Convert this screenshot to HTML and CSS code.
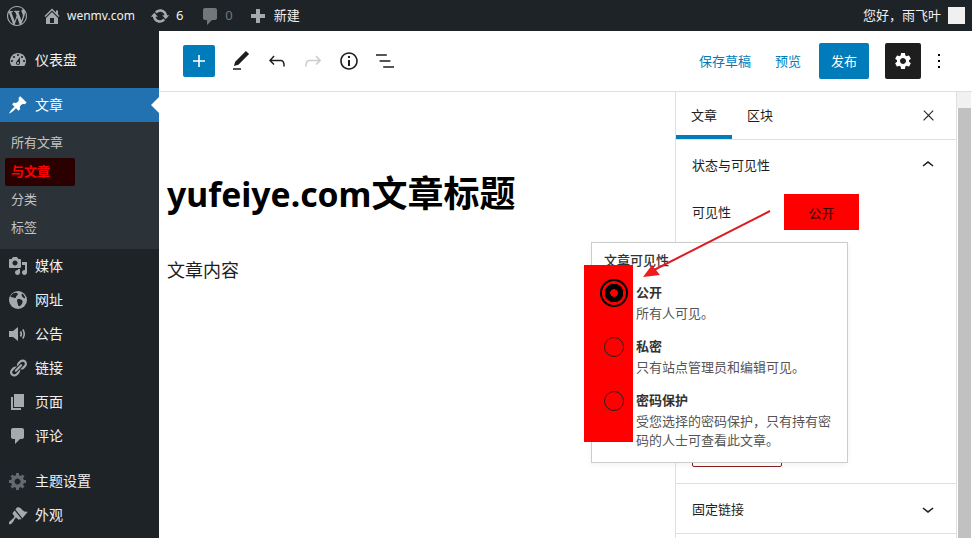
FILE: index.html
```html
<!DOCTYPE html>
<html lang="zh-CN">
<head>
    <meta charset="UTF-8">
    <meta name="viewport" content="width=device-width, initial-scale=1.0">
    <title>写文章</title>
    <link rel="stylesheet" href="styles.css">
</head>
<body>
    <header class="adminbar">
        <div class="adminbar-left">
            <svg class="ab-logo" viewBox="0 0 20 20"><path d="M20 10c0-5.51-4.49-10-10-10C4.48 0 0 4.49 0 10c0 5.52 4.48 10 10 10 5.51 0 10-4.48 10-10zM7.78 15.37L4.37 6.22c.55-.02 1.17-.08 1.17-.08.5-.06.44-1.13-.06-1.11 0 0-1.45.11-2.37.11-.18 0-.37 0-.58-.01C4.12 2.69 6.87 1.11 10 1.11c2.33 0 4.45.87 6.05 2.34-.68-.11-1.65.39-1.65 1.58 0 .74.45 1.36.9 2.1.35.61.55 1.36.55 2.46 0 1.49-1.4 5-1.4 5l-3.03-8.37c.54-.02.82-.17.82-.17.5-.05.44-1.25-.06-1.22 0 0-1.44.12-2.38.12-.87 0-2.33-.12-2.33-.12-.5-.03-.56 1.2-.06 1.22l.92.08 1.26 3.41zM17.41 10c.24-.64.74-1.87.43-4.25.7 1.29 1.05 2.71 1.05 4.25 0 3.29-1.73 6.24-4.4 7.78.97-2.59 1.94-5.2 2.92-7.78zM6.1 18.09C3.12 16.65 1.11 13.53 1.11 10c0-1.3.23-2.48.72-3.59C3.25 10.3 4.67 14.2 6.1 18.09zm4.03-6.63l2.58 6.98c-.86.29-1.76.45-2.71.45-.79 0-1.57-.11-2.29-.33.81-2.38 1.62-4.74 2.42-7.1z"/></svg>
            <span class="ab-item ab-site">
                <svg class="ab-icon" viewBox="0 0 20 20"><path d="M16 8.5l1.53 1.53-1.06 1.06L10 4.62l-6.47 6.47-1.06-1.06L10 2.5l4 4v-2h2v4zm-6-2.46l6 5.99V18H4v-5.97zM12 17v-5H8v5h4z"/></svg>
                wenmv.com
            </span>
            <span class="ab-item ab-updates">
                <svg class="ab-icon" viewBox="0 0 20 20"><path d="M10.2 3.28c3.53 0 6.43 2.61 6.92 6h2.08l-3.5 4-3.5-4h2.32c-.45-1.97-2.21-3.45-4.32-3.45-1.45 0-2.73.71-3.54 1.78L4.95 5.66C6.23 4.2 8.11 3.28 10.2 3.28zm-.4 13.44c-3.52 0-6.43-2.61-6.92-6H.8l3.5-4c1.17 1.33 2.33 2.67 3.5 4H5.48c.45 1.97 2.21 3.45 4.32 3.45 1.45 0 2.73-.71 3.54-1.78l1.71 1.95c-1.28 1.46-3.15 2.38-5.25 2.38z"/></svg>
                6
            </span>
            <span class="ab-item ab-comments">
                <svg class="ab-icon" viewBox="0 0 20 20"><path d="M5 2h10c1.1 0 2 .9 2 2v8c0 1.1-.9 2-2 2h-3l-5 5v-5H5c-1.1 0-2-.9-2-2V4c0-1.1.9-2 2-2z"/></svg>
                <span class="ab-zero">0</span>
            </span>
            <span class="ab-item ab-new">
                <svg class="ab-icon" viewBox="0 0 20 20"><path d="M17 8v4h-5v5H8v-5H3V8h5V3h4v5h5z"/></svg>
                新建
            </span>
        </div>
        <div class="adminbar-right">
            <span>您好，雨飞叶</span>
            <span class="avatar"></span>
        </div>
    </header>

    <div class="wrap">
        <nav class="sidemenu">
            <a class="menu-item">
                <svg class="menu-icon" viewBox="0 0 20 20"><path d="M3.76 16h12.48c1.1-1.37 1.76-3.11 1.76-5 0-4.42-3.58-8-8-8s-8 3.58-8 8c0 1.89.66 3.63 1.76 5zM10 4c.55 0 1 .45 1 1s-.45 1-1 1-1-.45-1-1 .45-1 1-1zM6 6c.55 0 1 .45 1 1s-.45 1-1 1-1-.45-1-1 .45-1 1-1zm8 0c.55 0 1 .45 1 1s-.45 1-1 1-1-.45-1-1 .45-1 1-1zm-5.37 5.55L12 7v6c0 1.1-.9 2-2 2s-2-.9-2-2c0-.57.24-1.08.63-1.45zM4 10c.55 0 1 .45 1 1s-.45 1-1 1-1-.45-1-1 .45-1 1-1zm12 0c.55 0 1 .45 1 1s-.45 1-1 1-1-.45-1-1 .45-1 1-1zm-5 3c0-.55-.45-1-1-1s-1 .45-1 1 .45 1 1 1 1-.45 1-1z"/></svg>
                仪表盘
            </a>
            <a class="menu-item active">
                <svg class="menu-icon" viewBox="0 0 20 20"><path d="M10.44 3.02l1.82-1.82 6.36 6.35-1.83 1.82c-1.05-.68-2.48-.57-3.41.36l-.75.75c-.92.93-1.04 2.35-.35 3.41l-1.83 1.82-2.41-2.41-2.8 2.79c-.42.42-3.38 2.71-3.8 2.29s1.86-3.39 2.28-3.81l2.79-2.79L4.1 9.36l1.83-1.82c1.05.69 2.48.57 3.4-.36l.75-.75c.93-.92 1.05-2.35.36-3.41z"/></svg>
                文章
            </a>
            <ul class="submenu">
                <li>所有文章</li>
                <li><span class="current">与文章</span></li>
                <li>分类</li>
                <li>标签</li>
            </ul>
            <a class="menu-item">
                <svg class="menu-icon" viewBox="0 0 20 20"><path d="M13 11V4c0-.55-.45-1-1-1h-1.67L9 1H5L3.67 3H2c-.55 0-1 .45-1 1v7c0 .55.45 1 1 1h10c.55 0 1-.45 1-1zM7 4.5c1.38 0 2.5 1.12 2.5 2.5S8.38 9.5 7 9.5 4.5 8.38 4.5 7 5.62 4.5 7 4.5zM14 6h5v10.5c0 1.38-1.12 2.5-2.5 2.5S14 17.88 14 16.5s1.12-2.5 2.5-2.5c.17 0 .34.02.5.05V9h-3V6zm-4 8.05V13h2v3.5c0 1.38-1.12 2.5-2.5 2.5S7 17.88 7 16.5 8.12 14 9.5 14c.17 0 .34.02.5.05z"/></svg>
                媒体
            </a>
            <a class="menu-item">
                <svg class="menu-icon" viewBox="0 0 20 20">
                    <circle cx="10" cy="10" r="9"/>
                    <path class="cutout" d="M5 3.5c2-1 4-1 5 .5 0 1.500-2 1.500-2 3s-2 1-3 .5S2 7 2.500 6zM10 9c2 0 4 .5 4.500 2s-1 4-2.500 5-2-1-2.500-3S8.500 9.500 10 9zM14 3.500c1.500.8 2.800 2.500 3.200 4.500-1.200.5-2.500-.5-3-1.500s-1-2-.2-3z"/>
                </svg>
                网址
            </a>
            <a class="menu-item">
                <svg class="menu-icon" viewBox="0 0 20 20">
                    <path d="M1 7h4l5-4v14l-5-4H1z"/>
                    <path class="line" d="M12.500 7.500c1 1.500 1 3.500 0 5M14.800 5.500c2 3 2 6 0 9"/>
                </svg>
                公告
            </a>
            <a class="menu-item">
                <svg class="menu-icon" viewBox="0 0 20 20"><path d="M17.74 2.76c1.68 1.69 1.68 4.41 0 6.1l-1.53 1.52c-1.12 1.12-2.7 1.47-4.14 1.09l2.62-2.61.76-.77.76-.76c.84-.84.84-2.2 0-3.04-.84-.85-2.2-.85-3.04 0l-.77.76-3.38 3.38c-.37-1.44-.02-3.02 1.1-4.14l1.52-1.53c1.69-1.68 4.42-1.68 6.1 0zM8.59 13.43l5.34-5.34c.42-.42.42-1.1 0-1.52-.44-.43-1.13-.39-1.53 0l-5.33 5.34c-.42.42-.42 1.1 0 1.52.44.43 1.13.39 1.52 0zm-.76 2.29l4.14-4.15c.38 1.44.03 3.02-1.09 4.14l-1.52 1.53c-1.69 1.68-4.41 1.68-6.1 0-1.68-1.68-1.68-4.42 0-6.1l1.53-1.52c1.12-1.12 2.7-1.47 4.14-1.1l-4.14 4.15c-.85.84-.85 2.2 0 3.05.84.84 2.2.84 3.04 0z"/></svg>
                链接
            </a>
            <a class="menu-item">
                <svg class="menu-icon" viewBox="0 0 20 20"><path d="M6 15V2h10v13H6zm-1 1h8v2H3V5h2v11z"/></svg>
                页面
            </a>
            <a class="menu-item">
                <svg class="menu-icon" viewBox="0 0 20 20"><path d="M5 2h9c1.1 0 2 .9 2 2v7c0 1.1-.9 2-2 2h-2l-5 5v-5H5c-1.1 0-2-.9-2-2V4c0-1.1.9-2 2-2z"/></svg>
                评论
            </a>
            <a class="menu-item spaced">
                <svg class="menu-icon dim" viewBox="0 0 20 20"><path d="M18 12h-2.180c-.17.7-.44 1.350-.81 1.930l1.540 1.540-2.100 2.100-1.540-1.540c-.58.36-1.230.63-1.910.79V19H8v-2.180c-.68-.16-1.330-.43-1.910-.79l-1.540 1.540-2.120-2.120 1.540-1.540c-.36-.58-.63-1.230-.79-1.910H1V9.030h2.170c.16-.7.44-1.350.8-1.940L2.430 5.550l2.100-2.100 1.540 1.540c.58-.37 1.240-.64 1.930-.81V2h3v2.180c.68.16 1.330.43 1.910.79l1.540-1.540 2.120 2.120-1.540 1.540c.36.59.64 1.240.8 1.940H18V12zm-8.500 1.500c1.660 0 3-1.340 3-3s-1.340-3-3-3-3 1.340-3 3 1.340 3 3 3z"/></svg>
                主题设置
            </a>
            <a class="menu-item">
                <svg class="menu-icon" viewBox="0 0 20 20"><path transform="translate(0 -0.5) scale(1 1.25)" d="M14.480 11.060L7.410 3.990l1.500-1.500c.5-.56 2.300-.47 3.510.32 1.210.8 1.430 1.280 2.910 2.100 1.180.64 2.450 1.260 4.450.85zm-.71.71L6.700 4.700 4.930 6.470c-.39.39-.39 1.020 0 1.410l1.060 1.060c.39.39.39 1.030 0 1.420-.6.6-1.430 1.110-2.210 1.690-.35.26-.7.53-1.010.84C1.430 13.230.4 14.790 1.200 15.600c.8.8 2.360-.22 3.710-1.570.31-.31.58-.66.84-1.010.58-.78 1.090-1.610 1.690-2.210.39-.39 1.020-.39 1.410 0l1.060 1.060c.39.39 1.020.39 1.410 0z"/></svg>
                外观
            </a>
        </nav>

        <main class="editor">
            <div class="toolbar">
                <div class="tools">
                    <button class="add-btn"><svg viewBox="0 0 24 24"><path d="M18 11.200h-5.200V6h-1.600v5.200H6v1.600h5.200V18h1.600v-5.200H18z"/></svg></button>
                    <button class="tool"><svg viewBox="0 0 24 24"><path d="M20.100 5.100L16.900 2 6.200 12.700l-1.300 4.400 4.500-1.300L20.100 5.100zM4 20.800h8v-1.500H4v1.500z"/></svg></button>
                    <button class="tool"><svg viewBox="0 0 24 24"><path d="M18.300 11.700c-.6-.6-1.400-.9-2.300-.9H6.700l2.900-3.300-1.100-1-4.500 5L8.500 16l1-1-2.700-2.700H16c.5 0 .9.2 1.300.5 1 1 1 3.400 1 4.500v.3h1.500v-.2c0-1.500 0-4.300-1.500-5.700z"/></svg></button>
                    <button class="tool off"><svg viewBox="0 0 24 24"><path d="M15.600 6.500l-1.100 1 2.900 3.300H8c-.9 0-1.700.3-2.300.9-1.400 1.500-1.400 4.200-1.400 5.600v.2h1.500v-.3c0-1.100 0-3.500 1-4.500.3-.3.7-.5 1.300-.5h9.200L14.500 15l1.100 1.100 4.600-4.600-4.600-5z"/></svg></button>
                    <button class="tool"><svg viewBox="0 0 24 24"><path d="M12 3.200c-4.800 0-8.800 3.900-8.800 8.800 0 4.800 3.900 8.800 8.800 8.800 4.800 0 8.800-3.900 8.800-8.800 0-4.800-4-8.800-8.800-8.800zm0 16c-4 0-7.200-3.300-7.200-7.200C4.800 8 8 4.800 12 4.800s7.200 3.300 7.200 7.200c0 4-3.200 7.200-7.200 7.200zM11 17h2v-6h-2v6zm0-8h2V7h-2v2z"/></svg></button>
                    <button class="tool"><svg viewBox="0 0 24 24"><path d="M13.800 5.200H3v1.500h10.800V5.200zm-3.600 12v1.500H21v-1.500H10.200zm7.200-6H6.600v1.500h10.800v-1.500z"/></svg></button>
                </div>
                <div class="actions">
                    <span class="link-btn">保存草稿</span>
                    <span class="link-btn preview">预览</span>
                    <button class="publish">发布</button>
                    <button class="settings"><svg viewBox="0 0 24 24"><path d="M19.140 12.940c.04-.3.06-.61.06-.94 0-.32-.02-.64-.07-.94l2.030-1.580c.18-.14.23-.41.12-.61l-1.920-3.320c-.12-.22-.37-.29-.59-.22l-2.390.96c-.5-.38-1.030-.7-1.620-.94l-.36-2.540c-.04-.24-.24-.41-.48-.41h-3.840c-.24 0-.43.17-.47.41l-.36 2.540c-.59.24-1.130.57-1.620.94l-2.390-.96c-.22-.08-.47 0-.59.22L2.740 8.870c-.12.21-.08.47.12.61l2.030 1.580c-.05.3-.09.63-.09.94s.02.64.07.94l-2.030 1.580c-.18.14-.23.41-.12.61l1.920 3.320c.12.22.37.29.59.22l2.390-.96c.5.38 1.030.7 1.620.94l.36 2.540c.05.24.24.41.48.41h3.840c.24 0 .44-.17.47-.41l.36-2.540c.59-.24 1.130-.56 1.620-.94l2.390.96c.22.08.47 0 .59-.22l1.920-3.320c.12-.22.07-.47-.12-.61l-2.010-1.580zM12 15.600c-1.980 0-3.600-1.620-3.600-3.600s1.620-3.600 3.600-3.600 3.600 1.620 3.600 3.600-1.620 3.600-3.600 3.600z"/></svg></button>
                    <button class="more"><svg viewBox="0 0 24 24"><path d="M13 19h-2v-2h2v2zm0-6h-2v-2h2v2zm0-6h-2V5h2v2z"/></svg></button>
                </div>
            </div>

            <div class="editor-body">
                <section class="content">
                    <h1 class="post-title"><span class="title-latin">yufeiye.com</span>文章标题</h1>
                    <p class="post-text">文章内容</p>
                </section>

                <aside class="panel">
                    <div class="tabs">
                        <span class="tab selected">文章</span>
                        <span class="tab">区块</span>
                        <svg class="tabs-close" viewBox="0 0 24 24"><path d="M13 11.800l6.100-6.300-1-1-6.100 6.200-6.100-6.200-1 1 6.100 6.300-6.500 6.700 1 1 6.500-6.600 6.500 6.600 1-1z"/></svg>
                    </div>
                    <div class="box box-status">
                        <div class="box-head">
                            <span>状态与可见性</span>
                            <svg viewBox="0 0 24 24"><path d="M6.500 12.400L12 8l5.500 4.400-.9 1.200L12 10l-4.500 3.600-1-1.200z"/></svg>
                        </div>
                        <div class="visibility-row">
                            <span>可见性</span>
                            <button class="visibility-value">公开</button>
                        </div>
                        <button class="trash-btn"></button>
                    </div>
                    <div class="box">
                        <div class="box-head">
                            <span>固定链接</span>
                            <svg viewBox="0 0 24 24"><path d="M17.500 11.600L12 16l-5.500-4.400.9-1.200L12 14l4.600-3.600 1 1.200z"/></svg>
                        </div>
                    </div>
                </aside>

                <div class="scrollbar">
                    <span class="scroll-up"></span>
                    <span class="scroll-thumb"></span>
                </div>
            </div>
        </main>
    </div>

    <!-- visibility popover, floats over the panel -->
    <div class="popover">
        <div class="popover-title">文章可见性</div>
        <div class="option">
            <strong>公开</strong>
            <span>所有人可见。</span>
        </div>
        <div class="option">
            <strong>私密</strong>
            <span>只有站点管理员和编辑可见。</span>
        </div>
        <div class="option">
            <strong>密码保护</strong>
            <span>受您选择的密码保护，只有持有密码的人士可查看此文章。</span>
        </div>
    </div>

    <div class="radio-strip">
        <span class="radio checked"></span>
        <span class="radio"></span>
        <span class="radio"></span>
    </div>

    <svg class="arrow" viewBox="0 0 972 538">
        <path class="arrow-line" d="M770 211L652 271"/>
        <path class="arrow-head" d="M643 277L652 265L660 275z"/>
    </svg>
</body>
</html>
```

FILE: styles.css
```css
* {
    box-sizing: border-box;
}
html, body {
    margin: 0;
    height: 100%;
    overflow: hidden;
}
body {
    font-family: "Noto Sans", "Noto Sans CJK SC", sans-serif;
    font-size: 13px;
    color: #1e1e1e;
    background-color: #fff;
    display: flex;
    flex-direction: column;
}
button {
    font: inherit;
    border: 0;
    padding: 0;
    background: none;
}
svg {
    display: block;
    fill: currentColor;
}

/* top admin bar */
.adminbar {
    height: 31px;
    flex: none;
    display: flex;
    justify-content: space-between;
    align-items: center;
    padding: 0 7px;
    background-color: #1d2327;
    color: #f0f0f1;
    line-height: 31px;
}
.adminbar-left, .adminbar-right, .ab-item {
    display: flex;
    align-items: center;
}
.ab-logo {
    width: 20px;
    height: 20px;
    color: #a7aaad;
}
.ab-icon {
    width: 20px;
    height: 20px;
    margin-right: 6px;
    color: #a7aaad;
}
.ab-site {
    margin-left: 15px;
    font-size: 12px;
}
.ab-site .ab-icon {
    margin-right: 5px;
}
.ab-updates {
    margin-left: 15px;
}
.ab-comments {
    margin-left: 17px;
}
.ab-comments .ab-icon {
    color: #72777c;
    margin-right: 5px;
}
.ab-zero {
    color: #72777c;
}
.ab-new {
    margin-left: 15px;
}
.avatar {
    width: 17px;
    height: 17px;
    margin: 0 0 0 7px;
    background-color: #f0f0f1;
}

.wrap {
    flex: 1;
    display: flex;
    min-height: 0;
}

/* left admin menu */
.sidemenu {
    width: 159px;
    flex: none;
    padding-top: 12px;
    background-color: #1d2327;
    color: #f0f0f1;
    font-size: 14px;
}
.menu-item {
    height: 34px;
    display: flex;
    align-items: flex-start;
    padding-left: 8px;
    line-height: 33px;
    position: relative;
}
.menu-icon {
    width: 20px;
    height: 20px;
    margin: 7px 7px 0 0;
    color: #a7aaad;
}
.menu-icon.dim {
    color: #646970;
}
.menu-icon .cutout {
    fill: #1d2327;
}
.menu-icon .line {
    fill: none;
    stroke: currentColor;
    stroke-width: 1.6;
}
.menu-item.active {
    margin-top: 11px;
    background-color: #2271b1;
    color: #fff;
}
.menu-item.active .menu-icon {
    color: #fff;
}
.menu-item.active::after {
    content: "";
    position: absolute;
    right: 0;
    top: 9px;
    border: 8px solid transparent;
    border-right-color: #fff;
    border-left-width: 0;
}
.menu-item.spaced {
    margin-top: 11px;
}
.submenu {
    list-style: none;
    margin: 0;
    padding: 7px 0 8px;
    height: 127px;
    background-color: #2c3338;
    color: #c3c4c7;
    font-size: 13px;
}
.submenu li {
    height: 28px;
    line-height: 26px;
    padding-left: 11px;
}
.submenu .current {
    display: block;
    width: 70px;
    height: 28px;
    margin: 1px 0 0 -6px;
    padding-left: 6px;
    border-radius: 2px;
    background-color: #2b0000;
    color: #f00;
    font-weight: 700;
}

/* editor top toolbar */
.editor {
    flex: 1;
    min-width: 0;
    display: flex;
    flex-direction: column;
}
.toolbar {
    height: 61px;
    flex: none;
    display: flex;
    justify-content: space-between;
    align-items: center;
    padding: 0 21px 1px 24px;
    border-bottom: 1px solid #e0e0e0;
}
.tools, .actions {
    display: flex;
    align-items: center;
}
.add-btn {
    width: 32px;
    height: 32px;
    margin-right: 8px;
    border-radius: 2px;
    background-color: #007cba;
    color: #fff;
}
.add-btn svg {
    width: 24px;
    height: 24px;
    margin: 4px;
}
.tool {
    width: 36px;
    height: 36px;
    padding: 6px;
    color: #1e1e1e;
}
.tool svg {
    width: 24px;
    height: 24px;
}
.tool.off {
    color: #ccc;
}
.link-btn {
    margin-right: 24px;
    color: #007cba;
}
.link-btn.preview {
    margin-right: 18px;
}
.publish {
    width: 50px;
    height: 36px;
    margin-right: 16px;
    border-radius: 2px;
    background-color: #007cba;
    color: #fff;
}
.settings {
    width: 36px;
    height: 36px;
    padding: 8px;
    border-radius: 2px;
    background-color: #1e1e1e;
    color: #fff;
}
.settings svg {
    width: 20px;
    height: 20px;
}
.more {
    width: 24px;
    height: 24px;
    margin-left: 6px;
}
.more svg {
    width: 24px;
    height: 24px;
}

.editor-body {
    flex: 1;
    min-height: 0;
    display: flex;
}

/* post area */
.content {
    flex: 1;
    min-width: 0;
    padding: 78px 8px 0;
}
.post-title {
    margin: 0;
    font-size: 36px;
    line-height: 48px;
    font-weight: 700;
    color: #000;
    white-space: nowrap;
}
.title-latin {
    font-size: 33.7px;
}
.post-text {
    margin: 38px 0 0;
    font-size: 18px;
    line-height: 28px;
}

/* settings sidebar */
.panel {
    width: 282px;
    flex: none;
    border-left: 1px solid #e0e0e0;
    border-right: 1px solid #e0e0e0;
}
.tabs {
    height: 48px;
    display: flex;
    align-items: stretch;
    position: relative;
    border-bottom: 1px solid #e0e0e0;
}
.tab {
    width: 56px;
    display: flex;
    align-items: center;
    justify-content: center;
    padding-bottom: 2px;
}
.tab.selected {
    box-shadow: inset 0 -4px 0 #007cba;
}
.tabs-close {
    width: 17px;
    height: 17px;
    margin: 15px 19px 0 auto;
}
.box {
    border-bottom: 1px solid #e0e0e0;
}
.box-status {
    height: 344px;
    display: flex;
    flex-direction: column;
    padding-bottom: 16px;
}
.box-head {
    height: 49px;
    display: flex;
    justify-content: space-between;
    align-items: center;
    padding: 0 16px 0 16px;
}
.box-head svg {
    width: 24px;
    height: 24px;
}
.visibility-row {
    display: flex;
    align-items: center;
    padding: 5px 0 0 16px;
}
.visibility-row span {
    width: 92px;
    padding-bottom: 2px;
}
.visibility-value {
    width: 75px;
    height: 36px;
    background-color: #f00;
    color: #3a0000;
}
.trash-btn {
    width: 90px;
    height: 36px;
    margin: auto 0 0 16px;
    border: 1px solid #8a1f1f;
    border-radius: 2px;
}

.scrollbar {
    width: 15px;
    flex: none;
    display: flex;
    flex-direction: column;
    padding-right: 1px;
}
.scroll-up {
    height: 16px;
    background-color: #f1f1f1;
}
.scroll-thumb {
    flex: 1;
    margin-left: 1px;
    background-color: #c1c1c1;
}

/* popover + overlays */
.popover {
    position: absolute;
    left: 591px;
    top: 242px;
    width: 257px;
    height: 221px;
    padding: 7px 12px 0 44px;
    background-color: #fff;
    border: 1px solid #ccc;
    box-shadow: 0 2px 6px rgba(0, 0, 0, 0.05);
}
.popover-title {
    margin-left: -32px;
    font-weight: 500;
    line-height: 20px;
    color: #333;
}
.option {
    margin-top: 13px;
}
.popover-title + .option {
    margin-top: 12px;
}
.option strong {
    display: block;
    font-weight: 700;
    line-height: 20px;
    color: #333;
}
.option span {
    display: block;
    margin-top: 2px;
    line-height: 19px;
    color: #555;
}
.radio-strip {
    position: absolute;
    left: 584px;
    top: 265px;
    width: 49px;
    height: 177px;
    padding: 18px 0 0 10px;
    background-color: #f00;
    display: flex;
    flex-direction: column;
    align-items: center;
    gap: 34px;
}
.radio {
    width: 20px;
    height: 20px;
    border: 1px solid #222;
    border-radius: 50%;
}
.radio.checked {
    background: radial-gradient(circle, #f00 0 3.5px, #000 4px 9px, #f00 9.5px);
    box-shadow: 0 0 0 2px #f00, 0 0 0 4px #000;
    border: 0;
}
.arrow {
    position: absolute;
    left: 0;
    top: 0;
    width: 972px;
    height: 538px;
    pointer-events: none;
}
.arrow-line {
    fill: none;
    stroke: #dc1c22;
    stroke-width: 2;
}
.arrow-head {
    fill: #ee1c1c;
}
```
